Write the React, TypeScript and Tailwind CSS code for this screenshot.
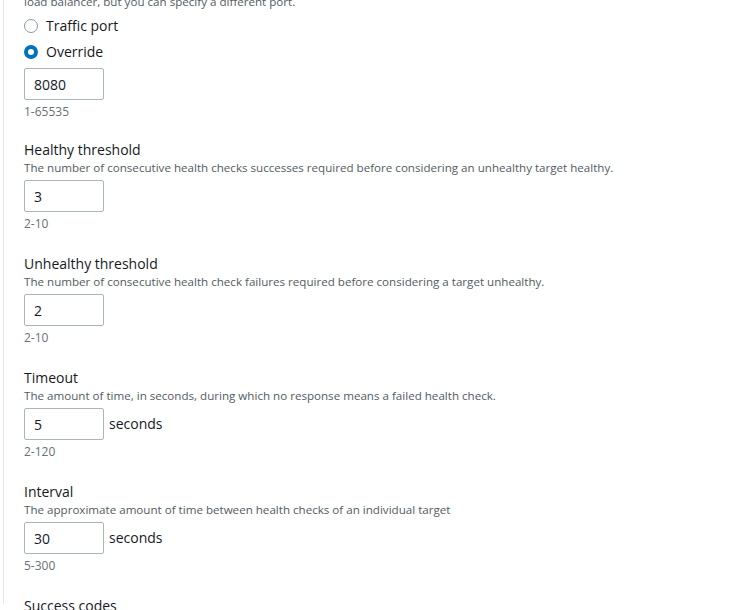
import React from 'react'

type Field = {
  label: string
  description: string
  value: string
  hint: string
  unit?: string
}

const fields: Field[] = [
  {
    label: 'Healthy threshold',
    description:
      'The number of consecutive health checks successes required before considering an unhealthy target healthy.',
    value: '3',
    hint: '2-10',
  },
  {
    label: 'Unhealthy threshold',
    description: 'The number of consecutive health check failures required before considering a target unhealthy.',
    value: '2',
    hint: '2-10',
  },
  {
    label: 'Timeout',
    description: 'The amount of time, in seconds, during which no response means a failed health check.',
    value: '5',
    hint: '2-120',
    unit: 'seconds',
  },
  {
    label: 'Interval',
    description: 'The approximate amount of time between health checks of an individual target',
    value: '30',
    hint: '5-300',
    unit: 'seconds',
  },
]

function Radio({ label, checked }: { label: string; checked?: boolean }) {
  return (
    <label className="flex items-center gap-2 h-5 text-sm text-[#16191f]">
      {checked ? (
        <span className="w-[14px] h-[14px] rounded-full border-4 border-[#0073bb] bg-white" />
      ) : (
        <span className="w-[14px] h-[14px] rounded-full border-[1.5px] border-[#8d99a8] bg-white" />
      )}
      {label}
    </label>
  )
}

function NumberInput({ value, unit }: { value: string; unit?: string }) {
  return (
    <div className="flex items-center gap-[5px]">
      <input
        readOnly
        value={value}
        className="w-20 h-8 px-[9px] border border-[#aab7b8] rounded-[2px] text-sm text-[#16191f] outline-none bg-white"
      />
      {unit && <span className="text-sm text-[#16191f]">{unit}</span>}
    </div>
  )
}

export default function App() {
  return (
    <div className="h-[610px] overflow-hidden bg-white pl-[3px] font-['Open_Sans',sans-serif]">
      <div className="h-full border-l border-[#e4e6e8] pl-5">
        <p className="-mt-[6px] text-[11.6px] leading-4 text-[#545b64]">
          load balancer, but you can specify a different port.
        </p>
        <div className="mt-[6px] flex flex-col gap-[6px]">
          <Radio label="Traffic port" />
          <Radio label="Override" checked />
        </div>
        <div className="mt-[6px]">
          <NumberInput value="8080" />
          <p className="mt-1 text-xs leading-4 text-[#687078]">1-65535</p>
        </div>

        <div className="mt-5 flex flex-col gap-[22px]">
          {fields.map((f) => (
            <div key={f.label}>
              <h3 className="text-sm leading-5 text-[#16191f]">{f.label}</h3>
              <p className="text-[11.6px] leading-4 text-[#545b64]">{f.description}</p>
              <div className="mt-1">
                <NumberInput value={f.value} unit={f.unit} />
              </div>
              <p className="mt-1 text-xs leading-4 text-[#687078]">{f.hint}</p>
            </div>
          ))}
          <h3 className="text-sm leading-5 text-[#16191f]">Success codes</h3>
        </div>
      </div>
    </div>
  )
}
